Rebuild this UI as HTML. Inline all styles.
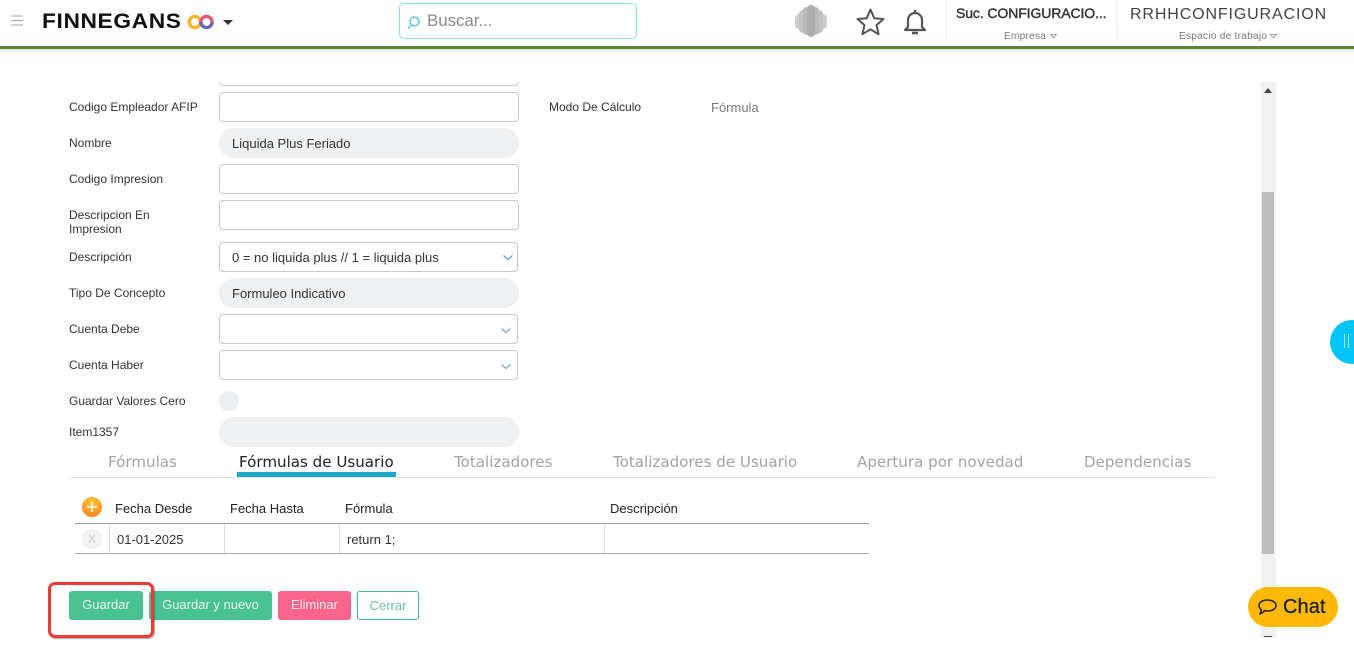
<!DOCTYPE html>
<html><head><meta charset="utf-8"><style>
html,body{margin:0;padding:0;background:#fff;width:1354px;height:653px;overflow:hidden;font-family:"Liberation Sans",sans-serif;color:#333}
div,span{position:absolute;white-space:nowrap;box-sizing:border-box}
svg{position:absolute;overflow:visible}
.l{left:69px;font-size:12px;color:#333;line-height:14px}
.i{left:219px;width:300px;height:30px;border:1px solid #c8c8c8;border-radius:4px;background:#fff}
.p{left:219px;width:300px;height:30px;border-radius:15px;background:#eef0f2;font-size:13px;line-height:31px;padding-left:13px;color:#333}
.s{left:219px;width:299px;height:30px;border:1px solid #c8c8c8;border-radius:4px;background:#fff;font-size:13px;line-height:29px;padding-left:12px;color:#333}
.t{top:453px;font-family:"DejaVu Sans",sans-serif;font-size:15px;line-height:18px;color:#a3a3a3;transform-origin:0 50%;transform:scaleX(1.006)}
.h{top:501px;font-size:13px;line-height:15px;color:#222}
.b{top:591px;height:29px;border-radius:3px;color:#e9f7f1;font-size:13px;line-height:27px;text-align:center;background:#48c293}
.v{width:1px;background:#ddd;top:524px;height:29px}
</style></head><body>
<!-- header -->
<div style="left:0;top:0;width:1354px;height:46px;background:#fff"></div>
<div style="left:0;top:46px;width:1354px;height:3px;background:#5a8439"></div>
<div style="left:0;top:49px;width:1354px;height:4px;background:linear-gradient(#dfe8d8,#fff)"></div>
<svg style="left:11px;top:15px" width="13" height="11"><path d="M0 1h12M0 5.500h12M0 10h12" stroke="#a5a5a5" stroke-width="1" fill="none"/></svg>
<div style="left:42px;top:9px;font-size:21px;line-height:26px;font-weight:bold;color:#111;letter-spacing:.55px;transform-origin:0 50%;transform:scaleX(1.085)">FINNEGANS</div>
<svg style="left:187px;top:13px" width="28" height="18" viewBox="0 0 28 18">
<circle cx="7.800" cy="9" r="5.600" fill="none" stroke="#f9b52b" stroke-width="3.400"/>
<path d="M13.900 9a5.600 5.600 0 0 1 11.200 0" fill="none" stroke="#e9577a" stroke-width="3.400"/>
<path d="M25.100 9a5.600 5.600 0 0 1-11.200 0" fill="none" stroke="#6c62b8" stroke-width="3.400"/></svg>
<svg style="left:223px;top:20px" width="10" height="6"><path d="M0 0h10L5 5z" fill="#333"/></svg>
<div style="left:399px;top:3px;width:238px;height:36px;border:1px solid #93dde8;border-radius:5px;background:#fff"></div>
<svg style="left:406px;top:15px" width="15" height="15" viewBox="0 0 15 15"><circle cx="8.500" cy="6.500" r="4.500" fill="none" stroke="#38bfe0" stroke-width="1.200"/><path d="M5.200 10L2 13.500" stroke="#38bfe0" stroke-width="1.200"/></svg>
<div style="left:427px;top:11px;font-size:17px;line-height:20px;color:#8a8a8a;letter-spacing:-.1px">Buscar...</div>
<svg style="left:795px;top:5px" width="32" height="32" viewBox="0 0 32 32">
<rect x="0" y="9" width="9" height="15" rx="4.500" fill="#cdcdcd"/><rect x="23" y="9" width="9" height="15" rx="4.500" fill="#cdcdcd"/>
<rect x="4" y="5" width="8" height="23" rx="4" fill="#c3c3c3"/><rect x="20" y="5" width="8" height="23" rx="4" fill="#c3c3c3"/>
<rect x="8" y="2" width="7" height="28" rx="3.500" fill="#bababa"/><rect x="17" y="2" width="7" height="28" rx="3.500" fill="#bababa"/>
<rect x="12" y="0" width="8" height="32" rx="4" fill="#aeaeae"/></svg>
<svg style="left:856px;top:8px" width="29" height="27" viewBox="0 0 29 27"><path d="M14.500 1.500l3.700 8.700 9.300.8-7 6.100 2.100 9.100-8.100-4.800-8.100 4.800 2.100-9.100-7-6.100 9.300-.8z" fill="none" stroke="#555" stroke-width="2" stroke-linejoin="round"/></svg>
<svg style="left:902px;top:9px" width="26" height="27" viewBox="0 0 26 27"><path d="M13 1v2M6 18V11a7 7 0 0 1 14 0v7l3 3H3z" fill="none" stroke="#555" stroke-width="2.200" stroke-linejoin="round"/><path d="M10 24h6" stroke="#555" stroke-width="2.500"/></svg>
<div style="left:945px;top:0;width:2px;height:45px;background:#f4f4f4"></div>
<div style="left:1116px;top:0;width:2px;height:45px;background:#f4f4f4"></div>
<div style="left:956px;top:5px;font-size:14px;line-height:16px;color:#333;letter-spacing:-.1px;-webkit-text-stroke:.4px #333">Suc. CONFIGURACIO...</div>
<div style="left:1004px;top:31px;font-size:10px;line-height:12px;color:#777;letter-spacing:.3px">Empresa</div>
<svg style="left:1050px;top:34px" width="7" height="5"><path d="M.5.500h6L3.500 4z" fill="none" stroke="#888" stroke-width=".8"/></svg>
<div style="left:1130px;top:6px;font-size:16px;line-height:18px;color:#444;letter-spacing:.87px">RRHHCONFIGURACION</div>
<div style="left:1179px;top:31px;font-size:10px;line-height:12px;color:#777;letter-spacing:.3px">Espacio de trabajo</div>
<svg style="left:1270px;top:34px" width="7" height="5"><path d="M.5.500h6L3.500 4z" fill="none" stroke="#888" stroke-width=".8"/></svg>

<!-- form -->
<div style="left:219px;top:70px;width:300px;height:16px;border:1px solid #c8c8c8;border-radius:4px"></div>
<div style="left:200px;top:53px;width:340px;height:29px;background:#fff"></div>
<div class="l" style="top:100px">Codigo Empleador AFIP</div><div class="i" style="top:92px"></div>
<div class="l" style="top:136px">Nombre</div><div class="p" style="top:128px">Liquida Plus Feriado</div>
<div class="l" style="top:172px">Codigo Impresion</div><div class="i" style="top:164px"></div>
<div class="l" style="top:208px">Descripcion En</div><div class="l" style="top:222px">Impresion</div><div class="i" style="top:200px"></div>
<div class="l" style="top:250px">Descripción</div><div class="s" style="top:242px">0 = no liquida plus // 1 = liquida plus</div>
<svg style="left:503px;top:255px" width="10" height="6"><path d="M.5.500L5 4.500l4.500-4" fill="none" stroke="#6f9fd8" stroke-width="1.300"/></svg>
<div class="l" style="top:286px">Tipo De Concepto</div><div class="p" style="top:278px">Formuleo Indicativo</div>
<div class="l" style="top:322px">Cuenta Debe</div><div class="s" style="top:314px"></div>
<svg style="left:501px;top:328px" width="10" height="6"><path d="M.5.500L5 4.500l4.500-4" fill="none" stroke="#8fa9c4" stroke-width="1.300"/></svg>
<div class="l" style="top:358px">Cuenta Haber</div><div class="s" style="top:350px"></div>
<svg style="left:501px;top:364px" width="10" height="6"><path d="M.5.500L5 4.500l4.500-4" fill="none" stroke="#8fa9c4" stroke-width="1.300"/></svg>
<div class="l" style="top:394px">Guardar Valores Cero</div>
<div style="left:219px;top:391px;width:20px;height:20px;border-radius:50%;background:#eceef0"></div>
<div class="l" style="top:425px">Item1357</div><div class="p" style="top:417px"></div>
<div class="l" style="left:549px;top:100px">Modo De Cálculo</div>
<div style="left:711px;top:100px;font-size:13px;line-height:15px;color:#777">Fórmula</div>

<!-- tabs -->
<div style="left:70px;top:477px;width:1145px;height:1px;background:#e2e2e2"></div>
<div class="t" style="left:108px">Fórmulas</div>
<div class="t" style="left:239px;color:#222">Fórmulas de Usuario</div>
<div style="left:237px;top:472px;width:159px;height:5px;background:#1fa9c9"></div>
<div class="t" style="left:454px">Totalizadores</div>
<div class="t" style="left:613px">Totalizadores de Usuario</div>
<div class="t" style="left:857px">Apertura por novedad</div>
<div class="t" style="left:1084px">Dependencias</div>

<!-- table -->
<div style="left:82px;top:497px;width:20px;height:20px;border-radius:50%;background:radial-gradient(circle at 50% 25%,#ffc42e,#f57c1f)"></div>
<svg style="left:87px;top:502px" width="10" height="10"><path d="M5 0v10M0 5h10" stroke="#fff" stroke-width="1.500"/></svg>
<div class="h" style="left:115px">Fecha Desde</div>
<div class="h" style="left:230px">Fecha Hasta</div>
<div class="h" style="left:345px">Fórmula</div>
<div class="h" style="left:610px">Descripción</div>
<div style="left:75px;top:523px;width:794px;height:1px;background:#999"></div>
<div style="left:75px;top:553px;width:794px;height:1px;background:#aaa"></div>
<div class="v" style="left:109px"></div><div class="v" style="left:224px"></div><div class="v" style="left:339px"></div><div class="v" style="left:604px"></div>
<div style="left:82px;top:529px;width:20px;height:20px;border-radius:50%;background:#f3f3f3;color:#ccc;font-size:12px;line-height:20px;text-align:center">X</div>
<div style="left:117px;top:532px;font-size:13px;line-height:15px;color:#333">01-01-2025</div>
<div style="left:347px;top:532px;font-size:13px;line-height:15px;color:#333">return 1;</div>

<!-- buttons -->
<div class="b" style="left:69px;width:74px">Guardar</div>
<div class="b" style="left:149px;width:123px">Guardar y nuevo</div>
<div class="b" style="left:278px;width:73px;background:#fb648c;color:#fde8ee">Eliminar</div>
<div class="b" style="left:357px;width:62px;background:#fff;border:1px solid #48b196;color:#6bbfa8">Cerrar</div>
<div style="left:48px;top:582px;width:106px;height:56px;border:3px solid #ee3a32;border-radius:7px;box-shadow:1px 1px 1px rgba(60,60,60,.45)"></div>

<!-- scrollbar -->
<div style="left:1261px;top:82px;width:15px;height:556px;background:#f1f1f1"></div>
<div style="left:1262px;top:192px;width:12px;height:362px;background:#bdbdbd"></div>
<svg style="left:1264px;top:88px" width="8" height="5"><path d="M0 5h8L4 0z" fill="#444"/></svg>
<div style="left:1264px;top:636px;width:8px;height:1px;background:#444"></div>

<!-- side handle -->
<div style="left:1330px;top:320px;width:44px;height:44px;border-radius:50%;background:#00c4f5"></div>
<div style="left:1344px;top:334px;width:1px;height:14px;background:#a9e9fb"></div>
<div style="left:1348px;top:334px;width:1px;height:14px;background:#a9e9fb"></div>

<!-- chat -->
<div style="left:1248px;top:587px;width:90px;height:40px;border-radius:20px;background:#ffb905"></div>
<svg style="left:1258px;top:599px" width="19" height="17" viewBox="0 0 19 17"><path d="M9.500 1C14 1 18 3 18 6.500S14 12 9.500 12c-1 0-2-.1-3-.4C5.500 13 3.800 14.500 1.800 15c.9-1 1.400-2.200 1.500-4.300C1.800 9.700 1 8.200 1 6.500 1 3 5 1 9.500 1z" fill="none" stroke="#222" stroke-width="1.500" stroke-linejoin="round"/></svg>
<div style="left:1283px;top:596px;font-size:20px;line-height:23px;color:#222;letter-spacing:.1px;-webkit-text-stroke:.3px #222">Chat</div>
</body></html>
